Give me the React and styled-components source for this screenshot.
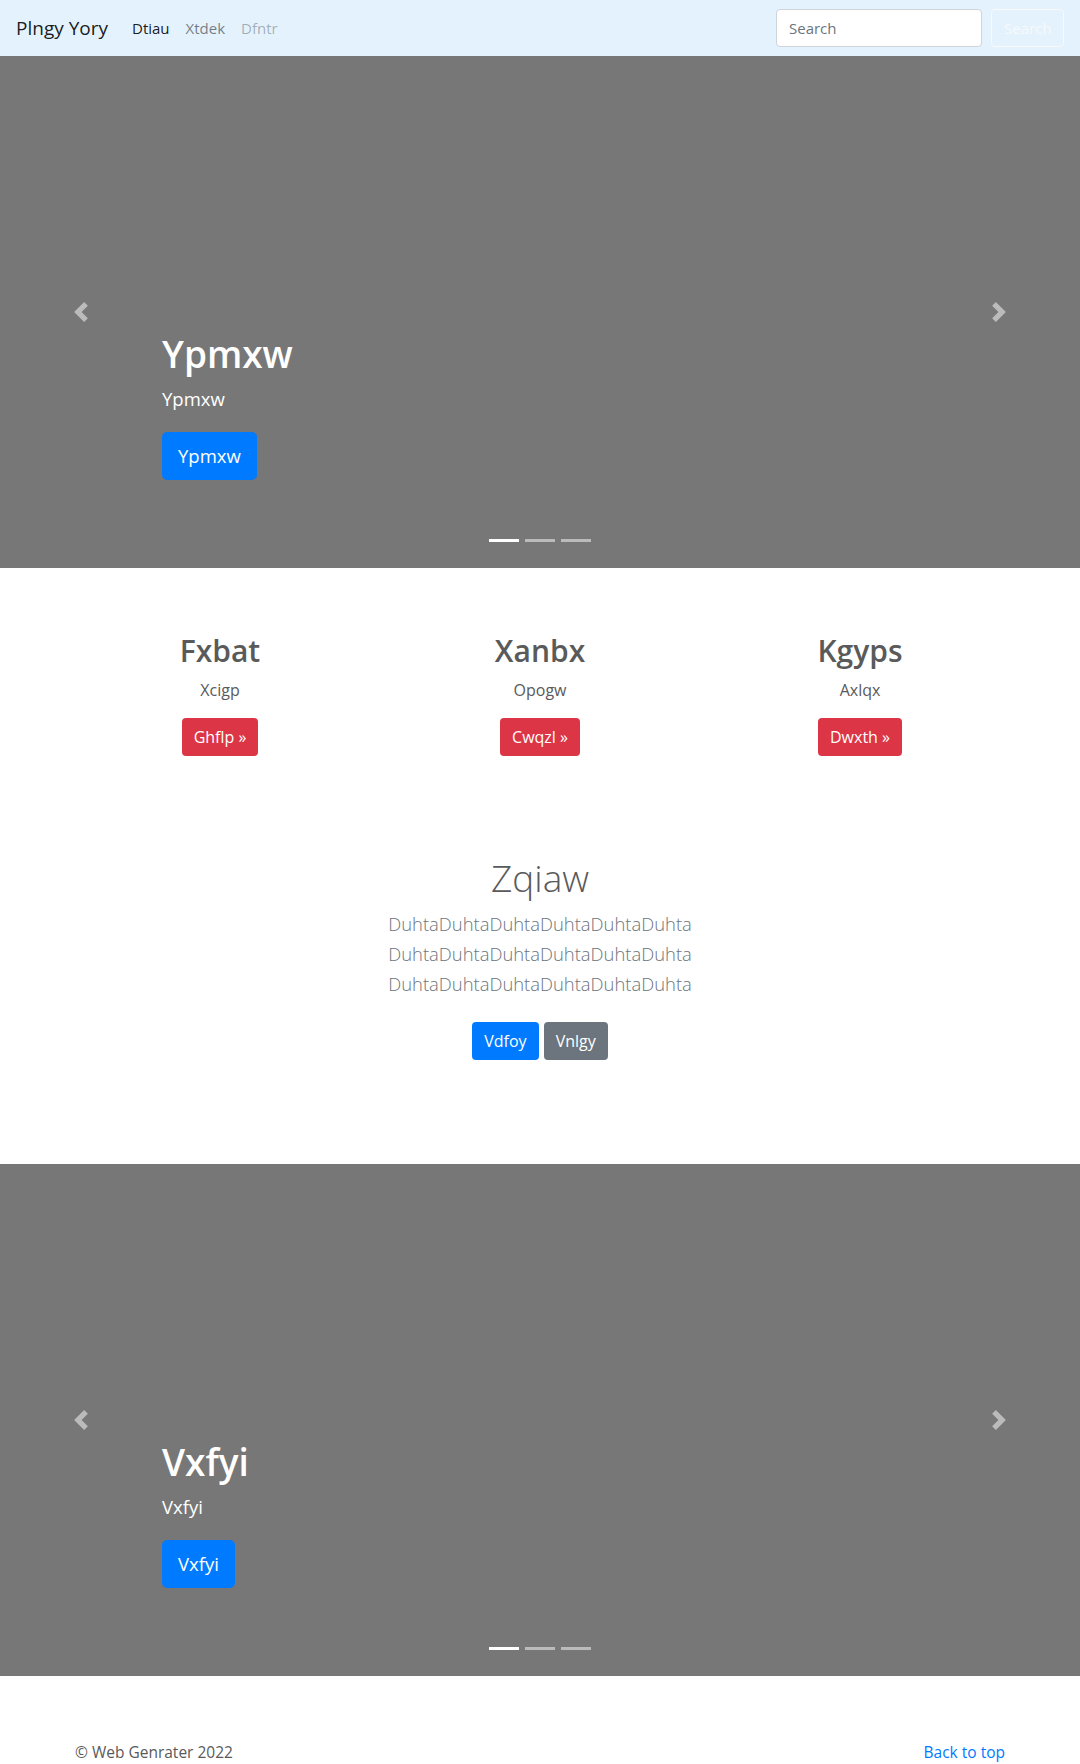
import React from "react";
import styled, { createGlobalStyle } from "styled-components";

const GlobalStyle = createGlobalStyle`
  * { box-sizing: border-box; }
  html, body { margin: 0; padding: 0; }
  body {
    font-family: "Open Sans", "Noto Sans", "Liberation Sans", sans-serif;
    font-size: 16px;
    line-height: 1.5;
    color: #5a5a5a;
    background: #fff;
  }
`;

const Navbar = styled.nav`
  height: 56px;
  display: flex;
  align-items: center;
  padding: 0 16px;
  background: #e3f2fd;
`;

const Brand = styled.a`
  font-size: 19px;
  line-height: 30px;
  color: rgba(0, 0, 0, 0.9);
  margin-right: 16px;
  text-decoration: none;
`;

const NavList = styled.div`
  display: flex;
  align-items: center;
  flex: 1;
`;

const NavLink = styled.a`
  padding: 8px;
  font-size: 15px;
  line-height: 24px;
  text-decoration: none;
  color: ${(p) =>
    p.$state === "active"
      ? "rgba(0,0,0,0.9)"
      : p.$state === "disabled"
      ? "rgba(0,0,0,0.3)"
      : "rgba(0,0,0,0.5)"};
`;

const SearchForm = styled.form`
  display: flex;
  align-items: center;
  gap: 9px;
  margin: 0;
`;

const SearchInput = styled.input`
  width: 206px;
  height: 38px;
  padding: 6px 12px;
  border: 1px solid #ced4da;
  border-radius: 4px;
  font-family: inherit;
  font-size: 15px;
  color: #495057;
  background: #fff;
  &::placeholder { color: #6c757d; }
`;

const OutlineLightButton = styled.button`
  width: 73px;
  height: 38px;
  padding: 6px 12px;
  border: 1px solid #f8f9fa;
  border-radius: 4px;
  background: transparent;
  color: #f8f9fa;
  font-family: inherit;
  font-size: 15px;
`;

const Carousel = styled.section`
  position: relative;
  height: 512px;
  background: #777;
  overflow: hidden;
`;

const Slide = styled.div`
  height: 100%;
  display: flex;
  flex-direction: column;
  justify-content: flex-end;
  align-items: flex-start;
  padding: 0 15% 88px 162px;
  color: #fff;
`;

const CaptionTitle = styled.h1`
  margin: 0 0 7px;
  font-size: 37px;
  line-height: 48px;
  font-weight: 600;
  color: #fff;
`;

const CaptionText = styled.p`
  margin: 0 0 19px;
  font-size: 18.5px;
  line-height: 28px;
  color: #fff;
`;

const Button = styled.a`
  display: inline-flex;
  align-items: center;
  justify-content: center;
  height: ${(p) => (p.$size === "lg" ? "48px" : "38px")};
  padding: ${(p) => (p.$size === "lg" ? "0 16px" : "0 12px")};
  border-radius: ${(p) => (p.$size === "lg" ? "5px" : "4px")};
  font-size: ${(p) => (p.$size === "lg" ? "18.5px" : "16px")};
  color: #fff;
  text-decoration: none;
  background: ${(p) =>
    p.$variant === "danger"
      ? "#dc3545"
      : p.$variant === "secondary"
      ? "#6c757d"
      : "#007bff"};
`;

const Control = styled.a`
  position: absolute;
  top: 0;
  bottom: 0;
  ${(p) => (p.$side === "prev" ? "left: 0;" : "right: 0;")}
  width: 15%;
  display: flex;
  align-items: center;
  justify-content: center;
  opacity: 0.5;
`;

const Indicators = styled.ol`
  position: absolute;
  left: 0;
  right: 0;
  bottom: 26px;
  margin: 0;
  padding: 0;
  list-style: none;
  display: flex;
  justify-content: center;
  gap: 6px;
`;

const Indicator = styled.li`
  width: 30px;
  height: 3px;
  background: #fff;
  opacity: ${(p) => (p.$active ? 1 : 0.5)};
`;

const Features = styled.section`
  width: 960px;
  margin: 64px auto 0;
  display: grid;
  grid-template-columns: repeat(3, 1fr);
`;

const Feature = styled.div`
  display: flex;
  flex-direction: column;
  align-items: center;
  text-align: center;
  padding: 0 15px;
`;

const FeatureTitle = styled.h2`
  margin: 0 0 8px;
  font-size: 30px;
  line-height: 38px;
  font-weight: 600;
  color: #5a5a5a;
`;

const FeatureText = styled.p`
  margin: 0 0 16px;
  font-size: 16px;
  line-height: 24px;
  color: #5a5a5a;
`;

const Jumbotron = styled.section`
  padding: 98px 0 104px;
  text-align: center;
  display: flex;
  flex-direction: column;
  align-items: center;
`;

const JumboTitle = styled.h1`
  margin: 0 0 7px;
  font-size: 37px;
  line-height: 48px;
  font-weight: 300;
  color: #5a5a5a;
`;

const Lead = styled.p`
  margin: 0 0 15px;
  font-size: 18.4px;
  line-height: 30px;
  font-weight: 300;
  color: #6c757d;
`;

const LeadLine = styled.span`
  display: block;
`;

const ButtonRow = styled.div`
  display: flex;
  gap: 5px;
  margin-top: 8px;
`;

const Footer = styled.footer`
  width: 960px;
  margin: 64px auto 0;
  padding: 0 15px;
  display: flex;
  justify-content: space-between;
  font-size: 15.5px;
  line-height: 24px;
  color: #5a5a5a;
`;

const FooterLink = styled.a`
  color: #007bff;
  text-decoration: none;
`;

const Chevron = ({ dir }) => (
  <svg width="20" height="20" viewBox="0 0 8 8" fill="#fff" aria-hidden="true">
    {dir === "prev" ? (
      <path d="M5.25 0l-4 4 4 4 1.5-1.5L4.25 4l2.5-2.5L5.25 0z" />
    ) : (
      <path d="M2.75 0l-1.5 1.5L3.75 4l-2.5 2.5L2.75 8l4-4-4-4z" />
    )}
  </svg>
);

const HeroCarousel = ({ title }) => (
  <Carousel>
    <Slide>
      <CaptionTitle>{title}</CaptionTitle>
      <CaptionText>{title}</CaptionText>
      <Button $size="lg" href="#">{title}</Button>
    </Slide>
    <Control $side="prev" href="#">
      <Chevron dir="prev" />
    </Control>
    <Control $side="next" href="#">
      <Chevron dir="next" />
    </Control>
    <Indicators>
      <Indicator $active />
      <Indicator />
      <Indicator />
    </Indicators>
  </Carousel>
);

const features = [
  { title: "Fxbat", text: "Xcigp", btn: "Ghflp" },
  { title: "Xanbx", text: "Opogw", btn: "Cwqzl" },
  { title: "Kgyps", text: "Axlqx", btn: "Dwxth" },
];

export default function App() {
  return (
    <>
      <GlobalStyle />
      <Navbar>
        <Brand href="#">Plngy Yory</Brand>
        <NavList>
          <NavLink $state="active" href="#">Dtiau</NavLink>
          <NavLink href="#">Xtdek</NavLink>
          <NavLink $state="disabled" href="#">Dfntr</NavLink>
        </NavList>
        <SearchForm onSubmit={(e) => e.preventDefault()}>
          <SearchInput type="search" placeholder="Search" aria-label="Search" />
          <OutlineLightButton type="submit">Search</OutlineLightButton>
        </SearchForm>
      </Navbar>

      <HeroCarousel title="Ypmxw" />

      <Features>
        {features.map((f) => (
          <Feature key={f.title}>
            <FeatureTitle>{f.title}</FeatureTitle>
            <FeatureText>{f.text}</FeatureText>
            <Button $variant="danger" href="#">{f.btn} &raquo;</Button>
          </Feature>
        ))}
      </Features>

      <Jumbotron>
        <JumboTitle>Zqiaw</JumboTitle>
        <Lead>
          <LeadLine>DuhtaDuhtaDuhtaDuhtaDuhtaDuhta</LeadLine>
          <LeadLine>DuhtaDuhtaDuhtaDuhtaDuhtaDuhta</LeadLine>
          <LeadLine>DuhtaDuhtaDuhtaDuhtaDuhtaDuhta</LeadLine>
        </Lead>
        <ButtonRow>
          <Button href="#">Vdfoy</Button>
          <Button $variant="secondary" href="#">Vnlgy</Button>
        </ButtonRow>
      </Jumbotron>

      <HeroCarousel title="Vxfyi" />

      <Footer>
        <span>&copy; Web Genrater 2022</span>
        <FooterLink href="#">Back to top</FooterLink>
      </Footer>
    </>
  );
}
